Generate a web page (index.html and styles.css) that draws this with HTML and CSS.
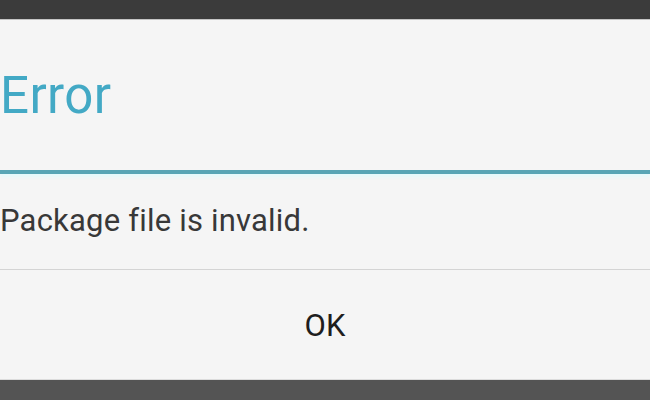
FILE: index.html
```html
<!DOCTYPE html>
<html lang="en">
<head>
  <meta charset="UTF-8" />
  <meta name="viewport" content="width=device-width, initial-scale=1.0"/>
  <title>Error</title>
  <link rel="stylesheet" href="styles.css">
</head>
<body>

<div class="top-bar"></div>
<div class="dialog">
  <div class="dialog-title">Error</div>
  <div class="dialog-message">Package file is invalid.</div>
  <div class="dialog-buttons">
    <button class="dialog-button">OK</button>
  </div>
</div>
<div class="bottom-bar"></div>

</body>
</html>
```

FILE: styles.css
```css
html, body {
  margin: 0;
  height: 100%;
}
body {
  font-family: Roboto, 'Noto Sans', sans-serif;
  background: #3b3b3b;
  display: flex;
  flex-direction: column;
  overflow: hidden;
}
.top-bar {
  height: 19px;
  background: #3b3b3b;
  flex-shrink: 0;
}
.dialog {
  background: #f5f5f5;
  border-top: 1px solid #c4c4c4;
  flex-shrink: 0;
}
.dialog-title {
  font-size: 51px;
  line-height: 60px;
  letter-spacing: 0.4px;
  color: #43a9c5;
  padding: 46px 0 44px 0;
  border-bottom: 4px solid #58a5b5;
  box-shadow: 0 3px 3px #e4f9fb;
}
.dialog-message {
  font-size: 31px;
  line-height: 36px;
  letter-spacing: 0.2px;
  color: #383838;
  padding: 29px 0 30px 0;
  border-bottom: 1px solid #d4d4d4;
}
.dialog-buttons {
  display: flex;
}
.dialog-button {
  flex: 1;
  font-family: inherit;
  font-size: 31px;
  line-height: 36px;
  color: #1e1e1e;
  background: none;
  border: none;
  padding: 38px 0 35px 0;
}
.bottom-bar {
  flex: 1;
  background: #545454;
  border-top: 1px solid #dcdcdc;
}
```
